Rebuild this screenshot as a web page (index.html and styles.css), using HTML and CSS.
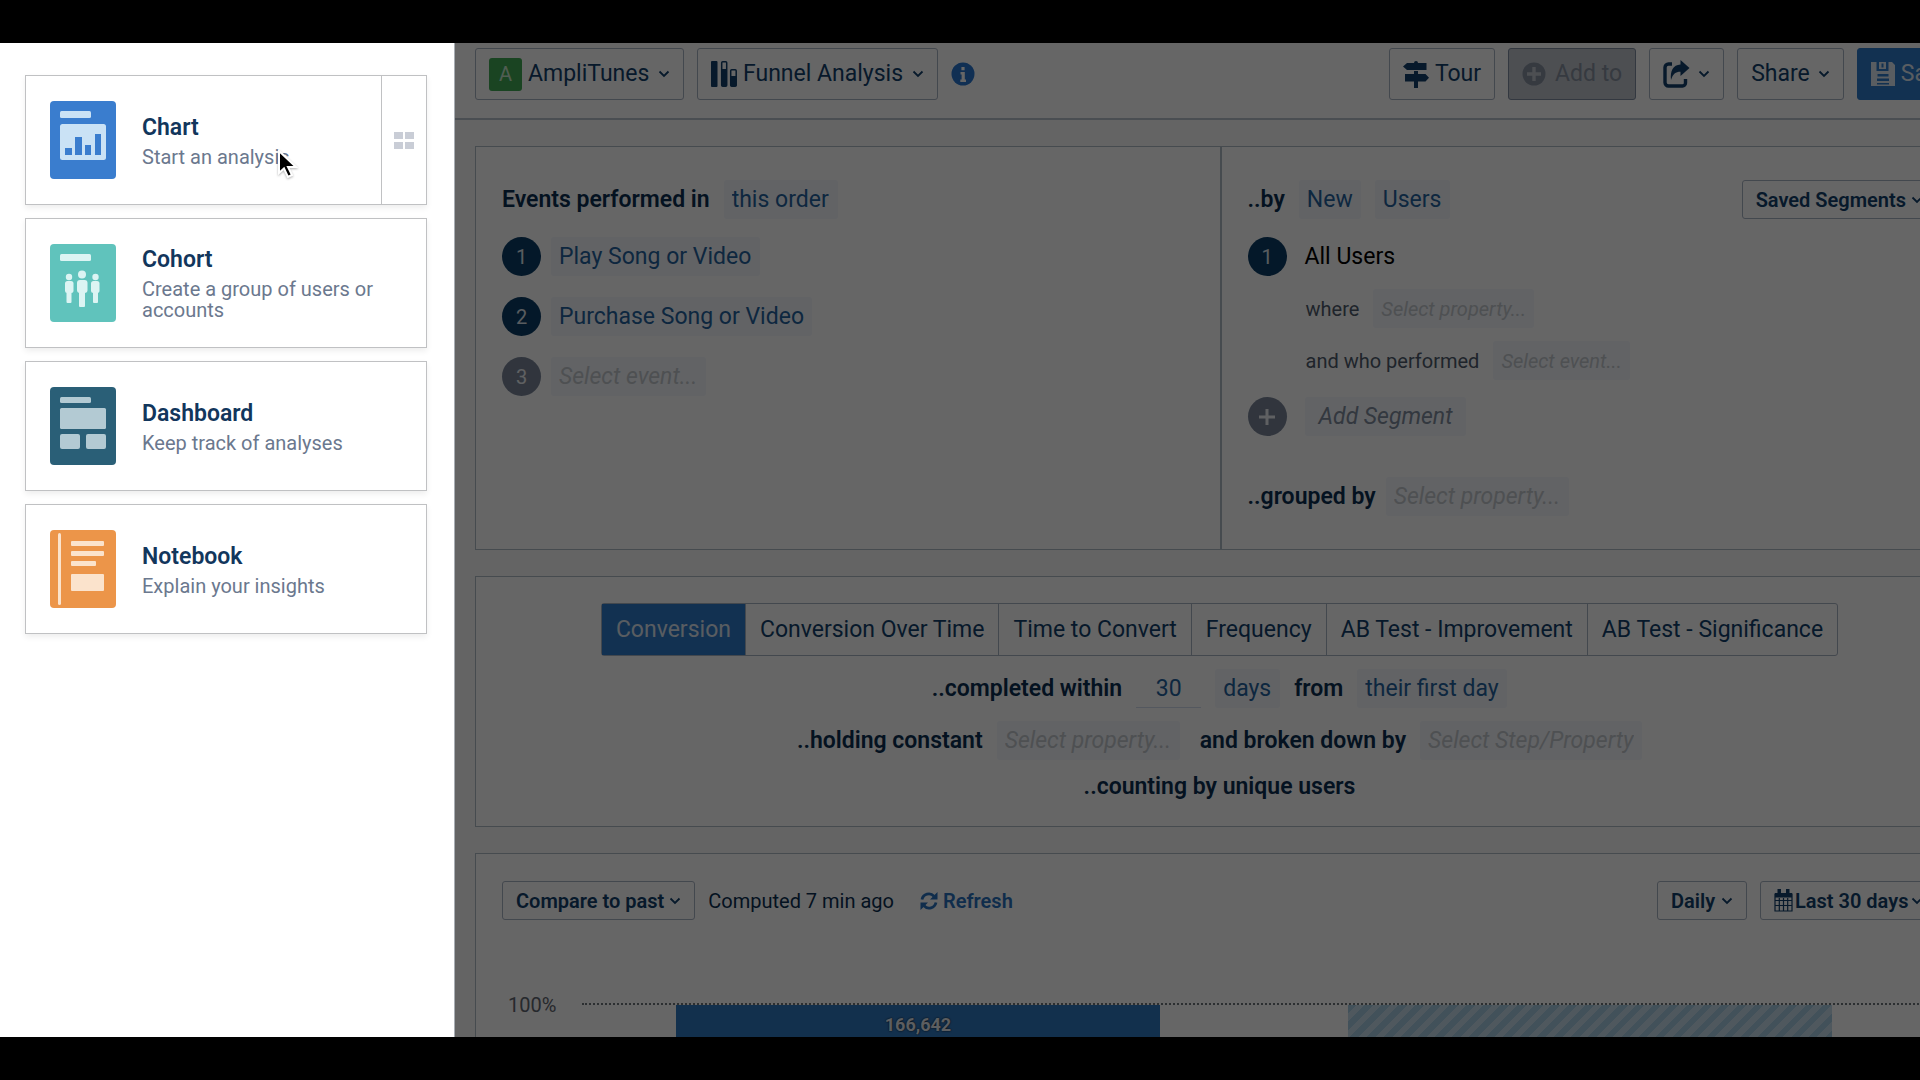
FILE: index.html
```html
<!DOCTYPE html>
<html lang="en">
<head>
<meta charset="utf-8">
<title>Funnel Analysis</title>
<link rel="stylesheet" href="styles.css">
</head>
<body>
<svg class="sprite" aria-hidden="true">
  <symbol id="chevron" viewBox="0 0 12 8"><path d="M1.5 1.5 6 6l4.500-4.500" fill="none" stroke="currentColor" stroke-width="1.800"/></symbol>
</svg>
<div class="app">
  <nav class="create" aria-label="Create new">
    <div class="card card-split">
      <button class="card-main">
        <svg class="card-icon" viewBox="0 0 66 78" aria-hidden="true"><rect width="66" height="78" rx="4" fill="#3a7dce"/><rect x="10" y="10" width="31" height="7" rx="1.500" fill="#cae2f5"/><rect x="10" y="23" width="46" height="36" rx="2.500" fill="#cae2f5"/><path d="M15 47h7v7h-7zM25 36h7v18h-7zM35 44h6v10h-6zM45 33h6v21h-6z" fill="#3a7dce"/></svg>
        <span class="card-text"><strong>Chart</strong><span>Start an analysis</span></span>
      </button>
      <button class="card-side" aria-label="Chart templates">
        <svg width="20" height="17" viewBox="0 0 20 17" aria-hidden="true"><path d="M0 0h9v7H0zM11 0h9v7h-9zM0 10h9v7H0zM11 10h9v7h-9z" fill="#c9cdd6"/></svg>
      </button>
    </div>
    <button class="card card-main">
      <svg class="card-icon" viewBox="0 0 66 78" aria-hidden="true"><rect width="66" height="78" rx="4" fill="#60c3bc"/><rect x="10" y="10" width="31" height="7" rx="1.500" fill="#dcf4f3"/><g fill="#dcf4f3"><circle cx="19" cy="33" r="3.200"/><circle cx="32" cy="30.500" r="4"/><circle cx="45.500" cy="33" r="3.200"/><rect x="15" y="37" width="8.500" height="12" rx="2.500"/><rect x="16.500" y="40" width="5" height="19" rx="1"/><rect x="27" y="36" width="10.500" height="13" rx="3"/><rect x="29" y="40" width="6" height="23" rx="1"/><rect x="41" y="37" width="8.500" height="12" rx="2.500"/><rect x="43" y="40" width="5" height="19" rx="1"/></g></svg>
      <span class="card-text"><strong>Cohort</strong><span>Create a group of users or accounts</span></span>
    </button>
    <button class="card card-main">
      <svg class="card-icon" viewBox="0 0 66 78" aria-hidden="true"><rect width="66" height="78" rx="4" fill="#2a5f77"/><g fill="#b3cad3"><rect x="10" y="10" width="31" height="6" rx="1.500"/><rect x="10" y="21" width="46" height="21" rx="1.500"/><rect x="10" y="47" width="20" height="15" rx="2"/><rect x="36" y="47" width="20" height="15" rx="2"/></g></svg>
      <span class="card-text"><strong>Dashboard</strong><span>Keep track of analyses</span></span>
    </button>
    <button class="card card-main">
      <svg class="card-icon" viewBox="0 0 66 78" aria-hidden="true"><rect width="66" height="78" rx="4" fill="#ec9549"/><g fill="#fbe3cc"><rect x="8" y="3" width="3" height="72" rx="1.500"/><rect x="21" y="11" width="33" height="5" rx="1"/><rect x="21" y="21" width="33" height="5" rx="1"/><rect x="21" y="31" width="25" height="5" rx="1"/><rect x="21" y="44" width="33" height="17" rx="1"/></g></svg>
      <span class="card-text"><strong>Notebook</strong><span>Explain your insights</span></span>
    </button>
    <svg class="cursor" width="20" height="30" viewBox="0 0 20 30" aria-hidden="true"><path d="M1 1v22l5-4.500 4 8.500 4-2-4-8h8z" fill="#000" stroke="#fff" stroke-width="2"/></svg>
  </nav>

  <div class="workspace">
    <header class="toolbar">
      <label class="box">
        <span class="project" aria-hidden="true">A</span>
        <select aria-label="Project"><option>AmpliTunes</option></select>
        <svg class="chev"><use href="#chevron"/></svg>
      </label>
      <label class="box">
        <svg width="26" height="28" viewBox="0 0 26 28" aria-hidden="true"><rect x="0" y="1" width="6.500" height="26" rx="1" fill="currentColor"/><rect x="10.700" y="1.700" width="5" height="24.600" rx="1" fill="none" stroke="currentColor" stroke-width="1.500"/><path d="M10.500 9h5.500v17h-5.500z" fill="currentColor"/><rect x="19.700" y="9.700" width="5.500" height="16.600" rx="1" fill="none" stroke="currentColor" stroke-width="1.500"/><path d="M19.500 16h6v10h-6z" fill="currentColor"/></svg>
        <select aria-label="Chart type"><option>Funnel Analysis</option></select>
        <svg class="chev"><use href="#chevron"/></svg>
      </label>
      <button class="info" aria-label="About this chart">
        <svg width="24" height="24" viewBox="0 0 24 24" aria-hidden="true"><circle cx="12" cy="12" r="11.500" fill="#2876cf"/><path d="M10.400 5h3.200v3.200h-3.200zM9.500 10h4.300v7.500H15V20H9.300v-2.500h1.300v-5H9.500z" fill="#fff"/></svg>
      </button>
      <div class="spacer"></div>
      <button class="box">
        <svg width="26" height="28" viewBox="0 0 26 28" aria-hidden="true"><path d="M11 3a2 2 0 0 1 4 0h8.500v7H4L0 6.500 4 3zM11 11h4v3h7.500l3.500 3.700-3.500 3.800H15V28h-4v-6.500H2V14h9z" fill="currentColor"/></svg>
        Tour
      </button>
      <button class="box muted" disabled>
        <svg width="24" height="24" viewBox="0 0 24 24" aria-hidden="true"><circle cx="12" cy="12" r="11.500" fill="currentColor"/><path d="M10.300 5h3.400v5.300H19v3.400h-5.300V19h-3.400v-5.300H5v-3.400h5.300z" fill="#c0c5ce"/></svg>
        Add to
      </button>
      <button class="box" aria-label="Export">
        <svg width="27" height="28" viewBox="0 0 27 28" aria-hidden="true"><path d="M9 4H5.500A3.500 3.500 0 0 0 2 7.500v15A3.500 3.500 0 0 0 5.500 26h14a3 3 0 0 0 3-3v-4" fill="none" stroke="currentColor" stroke-width="3.400"/><path d="M17.500 0 26.500 8l-9 8v-4.300c-5 0-7.500 2-9.500 8.300-1-9 2-15 9.500-15.500z" fill="currentColor"/></svg>
        <svg class="chev"><use href="#chevron"/></svg>
      </button>
      <button class="box">Share <svg class="chev"><use href="#chevron"/></svg></button>
      <button class="box primary">
        <svg width="24" height="24" viewBox="0 0 24 24" aria-hidden="true"><path d="M0 0h5.500v9h12V0H21l3 3v21H0z" fill="currentColor"/><path d="M8 0h7v7H8z" fill="currentColor"/><path d="M10.500 1.500h2v4h-2zM6.500 12h11v2.500h-11zM6 16.500h12V19H6zM6 21h12v1.500H6z" fill="#2f7acb"/></svg>
        Save
      </button>
    </header>

    <main class="panels">
      <section class="panel query">
        <div class="half">
          <div class="line head">
            <h2>Events performed in</h2>
            <select class="chip" aria-label="Event order"><option>this order</option></select>
          </div>
          <ol class="events">
            <li class="line"><span class="num">1</span><select class="chip" aria-label="Event 1"><option>Play Song or Video</option></select></li>
            <li class="line"><span class="num">2</span><select class="chip" aria-label="Event 2"><option>Purchase Song or Video</option></select></li>
            <li class="line"><span class="num off">3</span><select class="chip empty" aria-label="Event 3"><option>Select event...</option></select></li>
          </ol>
        </div>
        <div class="half">
          <div class="line head">
            <h2>..by</h2>
            <select class="chip" aria-label="New or active"><option>New</option></select>
            <select class="chip" aria-label="Unit"><option>Users</option></select>
            <button class="box small end">Saved Segments <svg class="chev"><use href="#chevron"/></svg></button>
          </div>
          <div class="line segment"><span class="num">1</span><span class="name">All Users</span></div>
          <div class="line filter"><label for="where">where</label><select id="where" class="chip empty"><option>Select property...</option></select></div>
          <div class="line filter"><label for="who">and who performed</label><select id="who" class="chip empty"><option>Select event...</option></select></div>
          <div class="line add">
            <span class="num off"><svg width="18" height="18" viewBox="0 0 18 18" aria-hidden="true"><path d="M9 1v16M1 9h16" stroke="currentColor" stroke-width="3"/></svg></span>
            <button class="chip wide">Add Segment</button>
          </div>
          <div class="line grouped"><label class="strong" for="group">..grouped by</label><select id="group" class="chip empty"><option>Select property...</option></select></div>
        </div>
      </section>

      <section class="panel settings">
        <div class="tabs" role="tablist">
          <button role="tab" aria-selected="true" class="tab on">Conversion</button>
          <button role="tab" class="tab">Conversion Over Time</button>
          <button role="tab" class="tab">Time to Convert</button>
          <button role="tab" class="tab">Frequency</button>
          <button role="tab" class="tab">AB Test - Improvement</button>
          <button role="tab" class="tab">AB Test - Significance</button>
        </div>
        <div class="line">
          <label class="strong" for="days">..completed within</label>
          <input id="days" class="days" value="30">
          <select class="chip" aria-label="Time unit"><option>days</option></select>
          <label class="strong" for="from">from</label>
          <select id="from" class="chip"><option>their first day</option></select>
        </div>
        <div class="line">
          <label class="strong" for="hold">..holding constant</label>
          <select id="hold" class="chip empty"><option>Select property...</option></select>
          <label class="strong next" for="break">and broken down by</label>
          <select id="break" class="chip empty"><option>Select Step/Property</option></select>
        </div>
        <p class="strong">..counting by unique users</p>
      </section>

      <section class="panel results">
        <div class="line">
          <button class="box small">Compare to past <svg class="chev"><use href="#chevron"/></svg></button>
          <span class="computed">Computed 7 min ago</span>
          <button class="refresh">
            <svg width="18" height="18" viewBox="0 0 18 18" aria-hidden="true"><path d="M2 7.500A7 7 0 0 1 14 4.200M16 10.500A7 7 0 0 1 4 13.800" fill="none" stroke="currentColor" stroke-width="2.800"/><path d="M17.500 0v7.500H10zM.5 18v-7.500H8z" fill="currentColor"/></svg>
            Refresh
          </button>
          <label class="box small end"><select aria-label="Interval"><option>Daily</option></select><svg class="chev"><use href="#chevron"/></svg></label>
          <label class="box small date">
            <svg width="19" height="23" viewBox="0 0 19 23" aria-hidden="true"><path d="M1 5h17v17H1zM1 11.500h17M1 16.500h17M5.300 9v13M9.500 9v13M13.700 9v13" fill="none" stroke="currentColor" stroke-width="1.200"/><path d="M1 4h17v4.500H1zM3.500 0h3.500v6H3.500zM12 0h3.500v6H12z" fill="currentColor"/></svg>
            <select aria-label="Date range"><option>Last 30 days</option></select><svg class="chev"><use href="#chevron"/></svg>
          </label>
        </div>
        <div class="chart">
          <span class="axis">100%</span>
          <div class="plot">
            <div class="step"><div class="bar">166,642</div></div>
            <div class="step"><div class="bar dropped"></div></div>
          </div>
        </div>
      </section>
    </main>
    <div class="shade"></div>
  </div>
</div>
</body>
</html>
```
FILE: styles.css
```css
* { box-sizing: border-box; }

body {
  margin: 0;
  height: 100vh;
  padding: 43px 0;
  background: #000;
  overflow: hidden;
  font-family: Roboto, "Liberation Sans", sans-serif;
  font-size: 23px;
  line-height: 28px;
  color: #0b2f52;
}

button, select, input {
  font: inherit;
  color: inherit;
  background: none;
  border: 0;
  margin: 0;
  padding: 0;
}

select { appearance: none; }

svg { flex: none; }

.sprite { position: absolute; width: 0; height: 0; }

.app {
  display: flex;
  height: 100%;
  overflow: hidden;
  background: #fff;
}

/* Create menu */
.create {
  position: relative;
  flex: 0 0 455px;
  display: flex;
  flex-direction: column;
  gap: 13px;
  padding: 32px 27px 0 25px;
  border-right: 1px solid #a8adb3;
}

.card {
  height: 130px;
  border: 1px solid #c0c1c3;
  box-shadow: 0 3px 6px rgba(0, 0, 0, .07);
}

.card-split { display: flex; }

.card-main {
  display: flex;
  align-items: center;
  flex: 1;
  gap: 26px;
  padding: 0 24px;
  text-align: left;
}

.create > .card-main { flex: none; }

.card-side {
  flex: 0 0 45px;
  display: grid;
  place-items: center;
  border-left: 1px solid #c0c1c3;
}

.card-icon { width: 66px; height: 78px; }

.card-text {
  display: flex;
  flex-direction: column;
  gap: 6px;
  padding-top: 2px;
  font-size: 20px;
  line-height: 21px;
  color: #6b788e;
}

.card-text strong {
  font-size: 23px;
  line-height: 26px;
  font-weight: 600;
  color: #12365c;
}

.cursor {
  position: absolute;
  left: 278px;
  top: 107px;
  filter: drop-shadow(0 1px 1px rgba(0, 0, 0, .3));
}

/* Workspace, wider than the visible area */
.workspace {
  position: relative;
  flex: 1;
  margin-right: -64px;
  background: #fafafa;
}

.shade {
  position: absolute;
  inset: 0;
  background: rgba(0, 0, 0, .6);
}

.toolbar {
  display: flex;
  align-items: center;
  gap: 13px;
  padding: 5px 20px 18px;
  background: #fff;
  border-bottom: 2px solid #b9c4cc;
}

.spacer { flex: 1; }

.box {
  display: flex;
  align-items: center;
  gap: 6px;
  height: 52px;
  padding: 0 13px;
  border: 1px solid #a9b3c2;
  border-radius: 3px;
  background: #fff;
  color: #123f6b;
  white-space: nowrap;
}

.box.small {
  height: 39px;
  gap: 5px;
  font-size: 20px;
  font-weight: 600;
}

.box.date { gap: 2px; }

.box.muted {
  gap: 9px;
  background: #c0c5ce;
  border-color: #7f8ca0;
  color: #8791a0;
}

.box.primary {
  background: #2f7acb;
  border-color: #2f7acb;
  color: #dfe8f3;
}

.chev { width: 12px; height: 8px; margin-left: 2px; }

.small .chev { margin-left: 0; }

.project {
  width: 33px;
  height: 33px;
  border-radius: 3px;
  background: #41ab55;
  color: #c9e8cf;
  font-size: 20px;
  line-height: 33px;
  text-align: center;
}

.info { display: flex; }

/* Panels */
.panels {
  display: flex;
  flex-direction: column;
  gap: 26px;
  padding: 26px 20px 0;
}

.panel {
  background: #fff;
  border: 1px solid #b0bcc6;
}

.line {
  display: flex;
  align-items: center;
  gap: 14px;
}

h2, .strong {
  margin: 0;
  font-size: 23px;
  line-height: 28px;
  font-weight: 600;
}

.chip {
  height: 39px;
  padding: 0 8px;
  border-radius: 3px;
  background: #f5f8fd;
  color: #25639f;
}

.chip.empty { color: #c3c8ce; font-style: italic; }

.chip.wide { padding: 0 14px; color: #808c9e; font-style: italic; }

.num {
  display: grid;
  place-items: center;
  flex: none;
  width: 39px;
  height: 39px;
  border-radius: 50%;
  background: #0b3c66;
  color: #dfe6ee;
  font-size: 20px;
}

.num.off { background: #7a869a; color: #eef1f5; }

.query { display: grid; grid-template-columns: 1fr 1fr; }

.half { padding: 33px 26px; }

.half + .half { border-left: 2px solid #b0bcc6; }

.head { margin-bottom: 18px; }

.end { margin-left: auto; }

.events {
  display: flex;
  flex-direction: column;
  gap: 21px;
  margin: 0;
  padding: 0;
  list-style: none;
}

.events .line { gap: 10px; }

.segment, .add { gap: 18px; }

.name { color: #000; }

.filter {
  margin-top: 13px;
  padding-left: 58px;
  font-size: 20px;
  color: #4f5b6c;
}

.add { margin-top: 17px; }

.grouped { margin-top: 41px; gap: 10px; }

.settings {
  display: flex;
  flex-direction: column;
  align-items: center;
  gap: 13px;
  padding: 26px 0 25px;
}

.settings .strong { white-space: nowrap; }

.next { margin-left: 6px; }

.tabs {
  display: flex;
  border: 1px solid #a9b3c2;
  border-radius: 3px;
}

.tab {
  height: 51px;
  padding: 0 14px;
  color: #123f6b;
  border-left: 1px solid #a9b3c2;
  white-space: nowrap;
}

.tab.on { background: #2f7acb; color: #dfe8f3; border: 0; }

.days {
  width: 65px;
  height: 39px;
  border-bottom: 1px solid #d3dded;
  color: #25639f;
  text-align: center;
}

.results { padding: 27px 26px 0; }

.results .line { gap: 13px; font-size: 20px; }

.refresh {
  display: flex;
  align-items: center;
  gap: 5px;
  margin-left: 13px;
  font-weight: 600;
  color: #2871bd;
}

.chart {
  display: grid;
  grid-template-columns: 80px 1fr;
  margin-top: 83px;
  padding-right: 11px;
}

.axis {
  padding-left: 6px;
  margin-top: -12px;
  font-size: 20px;
  color: #5f6670;
}

.plot {
  display: grid;
  grid-template-columns: 1fr 1fr;
  height: 200px;
  border-top: 2px dotted #6f757c;
}

.step { display: flex; justify-content: center; }

.bar {
  width: 72%;
  padding-top: 6px;
  background: #2f78c0;
  color: #e6ebf2;
  font-size: 18px;
  font-weight: 700;
  text-align: center;
  text-shadow: 0 0 2px #000;
}

.bar.dropped {
  background: repeating-linear-gradient(135deg, #a5cbe0 0 6px, #c5dbeb 6px 12px);
}
```
